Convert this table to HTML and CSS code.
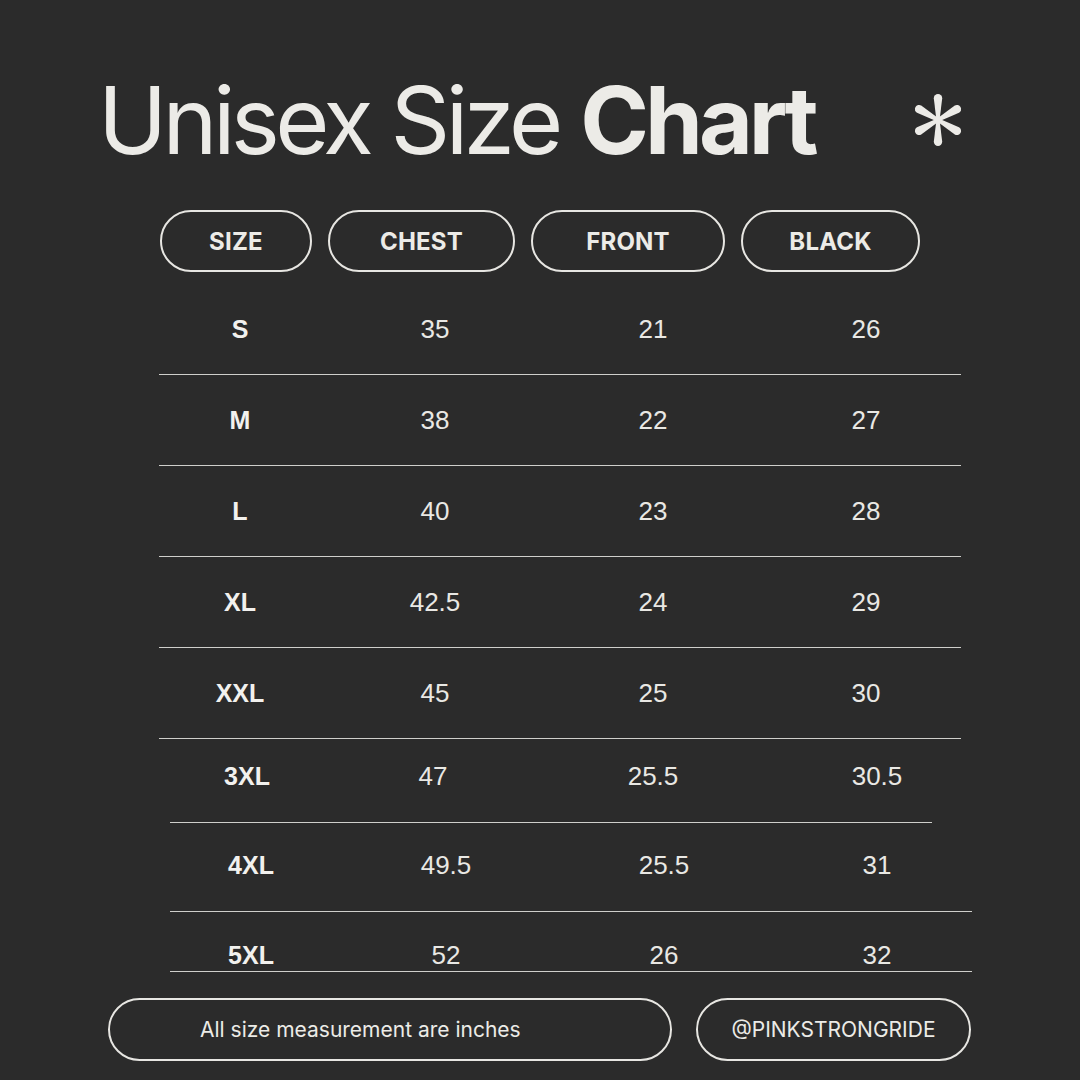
FILE: index.html
```html
<!DOCTYPE html>
<html lang="en">
<head>
<meta charset="utf-8">
<title>Unisex Size Chart</title>
<link rel="stylesheet" href="styles.css">
</head>
<body>
<main class="page">
  <header class="title-row">
    <h1 class="title">Unisex Size <strong>Chart</strong></h1>
    <svg class="asterisk" viewBox="-27 -27 54 54" width="54" height="54" aria-hidden="true">
      <g fill="#ecebe7">
        <path id="spoke" d="M -1.6 0 L -4.2 -21.8 A 4.2 4.2 0 0 1 4.2 -21.8 L 1.6 0 Z"/>
        <use href="#spoke" transform="rotate(60)"/>
        <use href="#spoke" transform="rotate(120)"/>
        <use href="#spoke" transform="rotate(180)"/>
        <use href="#spoke" transform="rotate(240)"/>
        <use href="#spoke" transform="rotate(300)"/>
      </g>
    </svg>
  </header>

  <div class="heads">
    <div class="pill pill--size">SIZE</div>
    <div class="pill pill--chest">CHEST</div>
    <div class="pill pill--front">FRONT</div>
    <div class="pill pill--black">BLACK</div>
  </div>

  <section class="table">
    <div class="row"><span class="cell cell--size">S</span><span class="cell">35</span><span class="cell">21</span><span class="cell">26</span></div>
    <div class="row"><span class="cell cell--size">M</span><span class="cell">38</span><span class="cell">22</span><span class="cell">27</span></div>
    <div class="row"><span class="cell cell--size">L</span><span class="cell">40</span><span class="cell">23</span><span class="cell">28</span></div>
    <div class="row"><span class="cell cell--size">XL</span><span class="cell">42.5</span><span class="cell">24</span><span class="cell">29</span></div>
    <div class="row"><span class="cell cell--size">XXL</span><span class="cell">45</span><span class="cell">25</span><span class="cell">30</span></div>
    <div class="row row--3xl"><span class="cell cell--size">3XL</span><span class="cell">47</span><span class="cell">25.5</span><span class="cell">30.5</span></div>
    <div class="row row--4xl"><span class="cell cell--size">4XL</span><span class="cell">49.5</span><span class="cell">25.5</span><span class="cell">31</span></div>
    <div class="row row--5xl"><span class="cell cell--size">5XL</span><span class="cell">52</span><span class="cell">26</span><span class="cell">32</span></div>
  </section>

  <footer class="foot">
    <div class="pill pill--note">All size measurement are inches</div>
    <div class="pill pill--handle">@PINKSTRONGRIDE</div>
  </footer>
</main>
</body>
</html>
```

FILE: styles.css
```css
* { box-sizing: border-box; }

html, body {
  margin: 0;
  padding: 0;
  background: #2b2b2b;
}

body {
  color: #ecebe7;
  font-family: Inter, "Liberation Sans", sans-serif;
}

.page {
  width: 1080px;
  height: 1080px;
  overflow: hidden;
  padding-top: 72px;
}

/* Title */
.title-row {
  display: flex;
  align-items: center;
  justify-content: space-between;
  margin-left: 98px;
  width: 867px;
  height: 96px;
}

.title {
  margin: 0;
  font-size: 93px;
  line-height: 92px;
  font-weight: 400;
  letter-spacing: -4.6px;
  white-space: nowrap;
}

.title strong {
  font-weight: 700;
  letter-spacing: -4px;
}

.asterisk {
  display: block;
  flex: none;
}

/* Pills */
.pill {
  display: flex;
  align-items: center;
  justify-content: center;
  border: 2px solid #e7e6e2;
  white-space: nowrap;
}

.heads {
  display: flex;
  gap: 16px;
  margin-top: 42px;
  margin-left: 160px;
}

.heads .pill {
  height: 62px;
  border-radius: 31px;
  font-size: 24px;
  font-weight: 700;
  letter-spacing: 0.2px;
}

.pill--size  { width: 152px; }
.pill--chest { width: 187px; }
.pill--front { width: 194px; }
.pill--black { width: 179px; }

/* Table */
.table {
  margin-top: 12px;
}

.row {
  display: grid;
  grid-template-columns: 162px 228px 208px 218px;
  align-items: center;
  width: 802px;
  height: 91px;
  margin-left: 159px;
  border-bottom: 1px solid #cfcfcb;
}

.row--3xl {
  grid-template-columns: 154px 218px 222px 226px;
  align-items: start;
  width: 762px;
  height: 84px;
  margin-left: 170px;
  padding-top: 22px;
}

.row--4xl {
  align-items: start;
  height: 89px;
  margin-left: 170px;
  padding-top: 27px;
}

.row--5xl {
  align-items: start;
  height: 60px;
  margin-left: 170px;
  padding-top: 28px;
}

.cell {
  display: block;
  text-align: center;
  font-family: "Liberation Sans", Arial, sans-serif;
  font-size: 26px;
  line-height: 30px;
  font-weight: 400;
  color: #e9e8e4;
}

.cell--size {
  font-size: 25px;
  font-weight: 700;
  color: #f2f1ee;
}

/* Footer */
.foot {
  display: flex;
  gap: 24px;
  margin-top: 26px;
  margin-left: 108px;
}

.foot .pill {
  height: 63px;
  border-radius: 32px;
  font-size: 21px;
  font-weight: 400;
}

.pill--note {
  width: 564px;
  justify-content: flex-start;
  padding-left: 90px;
}

.pill--handle {
  width: 275px;
}
```
